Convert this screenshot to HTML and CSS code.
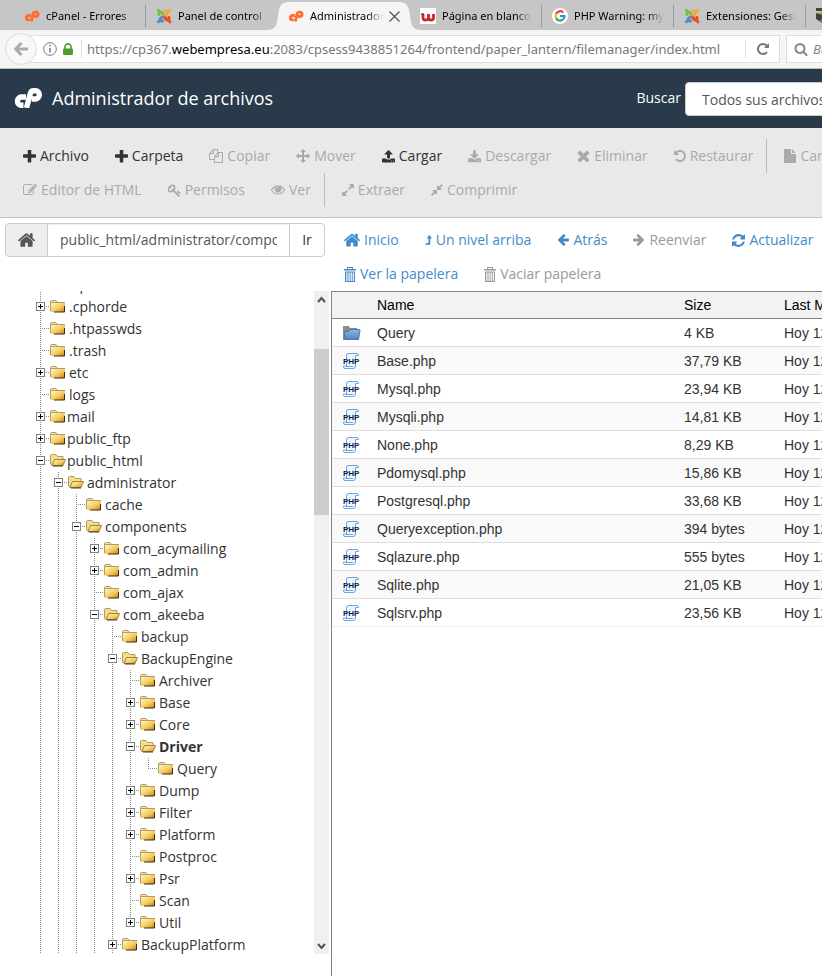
FILE: index.html
```html
<!DOCTYPE html>
<html lang="es">
<head>
<meta charset="utf-8">
<title>Administrador de archivos</title>
<link rel="stylesheet" href="styles.css">
</head>
<body>
<svg class="defs" aria-hidden="true">
  <defs>
    <linearGradient id="gold" x1="0" y1="0" x2="1" y2="1"><stop offset="0.1" stop-color="#fff3b8"/><stop offset="0.6" stop-color="#f3c85a"/><stop offset="0.85" stop-color="#dc9624"/><stop offset="1" stop-color="#8a5a10"/></linearGradient>
    <linearGradient id="blue" x1="0" y1="0" x2="0" y2="1"><stop offset="0" stop-color="#8fb8e6"/><stop offset="1" stop-color="#4d84c4"/></linearGradient>
  </defs>
  <symbol id="cp" viewBox="0 0 30 20"><g fill="none" stroke="currentColor" stroke-width="5.400"><path d="M13 9H8a4.200 4.200 0 0 0 0 8.300h2.500"/><path d="M13.500 20L17.300 5.500Q18 2.700 20.500 2.700h2.300a4.200 4.200 0 0 1 0 8.300h-4"/></g></symbol>
  <symbol id="joomla" viewBox="0 0 16 16"><g fill="none" stroke-width="3" stroke-linecap="round"><path stroke="#7ac143" d="M2.200 2.200h.2M3 6.500Q2.500 3.500 5 4L10 9"/><path stroke="#f9a541" d="M13.800 2.200h.1M9.500 3Q12.500 2.500 12 5L7 10"/><path stroke="#f44321" d="M13.800 13.800h.1M13 9.500Q13.500 12.500 11 12L8.500 9.500"/><path stroke="#5091cd" d="M2.200 13.800h.1M6.500 13Q3.500 13.500 4 11L6 9"/></g></symbol>
  <symbol id="plus" viewBox="192 192 1408 1408"><path d="M1600 736v192q0 40-28 68t-68 28h-416v416q0 40-28 68t-68 28h-192q-40 0-68-28t-28-68v-416h-416q-40 0-68-28t-28-68v-192q0-40 28-68t68-28h416v-416q0-40 28-68t68-28h192q40 0 68 28t28 68v416h416q40 0 68 28t28 68z"/></symbol>
  <symbol id="search" viewBox="0 0 1792 1792"><path d="M1216 832q0-185-131.500-316.500t-316.500-131.500-316.500 131.500-131.500 316.500 131.500 316.500 316.500 131.500 316.500-131.500 131.500-316.500zm512 832q0 52-38 90t-90 38q-54 0-90-38l-343-342q-179 124-399 124-143 0-273.500-55.500t-225-150-150-225-55.500-273.500 55.500-273.500 150-225 225-150 273.500-55.500 273.500 55.500 225 150 150 225 55.500 273.500q0 220-124 399l343 343q37 37 37 90z"/></symbol>
  <symbol id="home" viewBox="90 230 1612 1310"><path d="M1472 992v480q0 26-19 45t-45 19h-384v-384h-256v384h-384q-26 0-45-19t-19-45v-480q0-1 .5-3t.5-3l575-474 575 474q1 2 1 6zm223-69l-62 74q-8 9-21 11h-3q-13 0-21-7l-692-577-692 577q-12 8-24 7-13-2-21-11l-62-74q-8-10-7-23.500t11-21.500l719-599q32-26 76-26t76 26l244 204v-195q0-14 9-23t23-9h192q14 0 23 9t9 23v408l219 182q10 8 11 21.500t-7 23.500z"/></symbol>
  <symbol id="move" viewBox="0 0 1792 1792"><path d="M1792 896q0 26-19 45l-256 256q-19 19-45 19t-45-19-19-45v-128h-384v384h128q26 0 45 19t19 45-19 45l-256 256q-19 19-45 19t-45-19l-256-256q-19-19-19-45t19-45 45-19h128v-384h-384v128q0 26-19 45t-45 19-45-19l-256-256q-19-19-19-45t19-45l256-256q19-19 45-19t45 19 19 45v128h384v-384h-128q-26 0-45-19t-19-45 19-45l256-256q19-19 45-19t45 19l256 256q19 19 19 45t-19 45-45 19h-128v384h384v-128q0-26 19-45t45-19 45 19l256 256q19 19 19 45z"/></symbol>
  <symbol id="upload" viewBox="64 64 1664 1664"><path d="M1344 1472q0-26-19-45t-45-19-45 19-19 45 19 45 45 19 45-19 19-45zm256 0q0-26-19-45t-45-19-45 19-19 45 19 45 45 19 45-19 19-45zm128-224v320q0 40-28 68t-68 28h-1472q-40 0-68-28t-28-68v-320q0-40 28-68t68-28h427q21 56 70.500 92t110.500 36h256q61 0 110.500-36t70.500-92h427q40 0 68 28t28 68zm-325-648q-17 40-59 40h-256v448q0 26-19 45t-45 19h-256q-26 0-45-19t-19-45v-448h-256q-42 0-59-40-17-39 14-69l448-448q18-19 45-19t45 19l448 448q31 30 14 69z"/></symbol>
  <symbol id="download" viewBox="64 0 1664 1600"><path d="M1344 1344q0-26-19-45t-45-19-45 19-19 45 19 45 45 19 45-19 19-45zm256 0q0-26-19-45t-45-19-45 19-19 45 19 45 45 19 45-19 19-45zm128-224v320q0 40-28 68t-68 28h-1472q-40 0-68-28t-28-68v-320q0-40 28-68t68-28h465l135 136q58 56 136 56t136-56l136-136h464q40 0 68 28t28 68zm-325-569q17 41-14 70l-448 448q-18 19-45 19t-45-19l-448-448q-31-29-14-70 17-39 59-39h256v-448q0-26 19-45t45-19h256q26 0 45 19t19 45v448h256q42 0 59 39z"/></symbol>
  <symbol id="times" viewBox="292 292 1208 1332"><path d="M1490 1322q0 40-28 68l-136 136q-28 28-68 28t-68-28l-294-294-294 294q-28 28-68 28t-68-28l-136-136q-28-28-28-68t28-68l294-294-294-294q-28-28-28-68t28-68l136-136q28-28 68-28t68 28l294 294 294-294q28-28 68-28t68 28l136 136q28 28 28 68t-28 68l-294 294 294 294q28 28 28 68z"/></symbol>
  <symbol id="undo" viewBox="128 128 1536 1536"><path d="M1664 896q0 156-61 298t-164 245-245 164-298 61q-172 0-327-72.500t-264-204.500q-7-10-6.500-22.500t8.500-20.500l137-138q10-9 25-9 16 2 23 12 73 95 179 147t225 52q104 0 198.500-40.500t163.500-109.500 109.500-163.500 40.500-198.500-40.500-198.500-109.500-163.500-163.500-109.500-198.500-40.500q-98 0-188 35.500t-160 101.500l137 138q31 30 14 69-17 40-59 40h-448q-26 0-45-19t-19-45v-448q0-42 40-59 39-17 69 14l130 129q107-101 244.500-156.500t284.500-55.500q156 0 298 61t245 164 164 245 61 298z"/></symbol>
  <symbol id="refresh" viewBox="128 128 1536 1536"><path d="M1639 1056q0 5-1 7-64 268-268 434.500t-478 166.500q-146 0-282.500-55t-243.500-157l-129 129q-19 19-45 19t-45-19-19-45v-448q0-26 19-45t45-19h448q26 0 45 19t19 45-19 45l-137 137q71 66 161 102t187 36q134 0 250-65t186-179q11-17 53-117 8-23 30-23h192q13 0 22.500 9.500t9.500 22.500zm25-800v448q0 26-19 45t-45 19h-448q-26 0-45-19t-19-45 19-45l138-138q-148-137-349-137-134 0-250 65t-186 179q-11 17-53 117-8 23-30 23h-199q-13 0-22.500-9.500t-9.500-22.500v-7q65-268 270-434.500t480-166.500q146 0 284 55.500t245 156.500l130-129q19-19 45-19t45 19 19 45z"/></symbol>
  <symbol id="left" viewBox="64 192 1600 1550"><path d="M1664 896v128q0 53-32.500 90.500t-84.500 37.500h-704l293 294q38 36 38 90t-38 90l-75 76q-37 37-90 37-52 0-91-37l-651-652q-37-37-37-90 0-52 37-91l651-650q38-38 91-38 52 0 90 38l75 74q38 38 38 91t-38 91l-293 293h704q52 0 84.500 37.500t32.500 90.500z"/></symbol>
  <symbol id="expand" viewBox="128 128 1536 1536"><path d="M883 1056q0 13-10 23l-332 332 144 144q19 19 19 45t-19 45-45 19h-448q-26 0-45-19t-19-45v-448q0-26 19-45t45-19 45 19l144 144 332-332q10-10 23-10t23 10l114 114q10 10 10 23zm781-864v448q0 26-19 45t-45 19-45-19l-144-144-332 332q-10 10-23 10t-23-10l-114-114q-10-10-10-23t10-23l332-332-144-144q-19-19-19-45t19-45 45-19h448q26 0 45 19t19 45z"/></symbol>
  <symbol id="compress" viewBox="128 128 1536 1536"><path d="M896 960v448q0 26-19 45t-45 19-45-19l-144-144-332 332q-10 10-23 10t-23-10l-114-114q-10-10-10-23t10-23l332-332-144-144q-19-19-19-45t19-45 45-19h448q26 0 45 19t19 45zm755-672q0 13-10 23l-332 332 144 144q19 19 19 45t-19 45-45 19h-448q-26 0-45-19t-19-45v-448q0-26 19-45t45-19 45 19l144 144 332-332q10-10 23-10t23 10l114 114q10 10 10 23z"/></symbol>
  <symbol id="eye" viewBox="0 64 1792 1792"><path d="M1664 960q-152-236-381-353 61 104 61 225 0 185-131.500 316.500t-316.500 131.500-316.500-131.500-131.500-316.500q0-121 61-225-229 117-381 353 133 205 333.500 326.500t434.500 121.500 434.500-121.500 333.500-326.500zm-720-384q0-20-14-34t-34-14q-125 0-214.500 89.500t-89.500 214.500q0 20 14 34t34 14 34-14 14-34q0-86 61-147t147-61q20 0 34-14t14-34zm848 384q0 34-20 69-140 230-376.500 368.500t-499.500 138.500-499.500-139-376.500-368q-20-35-20-69t20-69q140-229 376.500-368t499.500-139 499.500 139 376.500 368q20 35 20 69z"/></symbol>
  <symbol id="key" viewBox="64 64 1664 1664"><path d="M832 512q0-80-56-136t-136-56-136 56-56 136q0 42 19 83-41-19-83-19-80 0-136 56t-56 136 56 136 136 56 136-56 56-136q0-42-19-83 41 19 83 19 80 0 136-56t56-136zm851 704q0 17-49 66t-66 49q-9 0-28.500-16t-36.500-33-38.500-40-24.500-26l-96 96 220 220q28 28 28 68 0 42-39 81t-81 39q-40 0-68-28l-671-671q-176 131-365 131-163 0-265.500-102.500t-102.500-265.500q0-160 95-313t248-248 313-95q163 0 265.500 102.500t102.500 265.500q0 189-131 365l355 355 96-96q-3-3-26-24.500t-40-38.500-33-36.500-16-28.500q0-17 49-66t66-49q13 0 23 10 6 6 46 44.500t82 79.500 86.500 86 73 78 28.500 41z"/></symbol>
  <symbol id="file" viewBox="128 0 1536 1792"><path d="M1152 512v-472q22 14 36 28l408 408q14 14 28 36h-472zm-128 32q0 40 28 68t68 28h544v1056q0 40-28 68t-68 28h-1344q-40 0-68-28t-28-68v-1600q0-40 28-68t68-28h800v544z"/></symbol>
  <symbol id="edit" viewBox="0 64 1792 1664"><path d="M888 1184l116-116-152-152-116 116v56h96v96h56zm440-720q-16-16-33 1l-350 350q-17 17-1 33t33-1l350-350q17-17 1-33zm80 594v190q0 119-84.500 203.500t-203.500 84.500h-832q-119 0-203.500-84.500t-84.500-203.500v-832q0-119 84.500-203.500t203.500-84.500h832q63 0 117 25 15 7 18 23 3 17-9 29l-49 49q-14 14-32 8-23-6-45-6h-832q-66 0-113 47t-47 113v832q0 66 47 113t113 47h832q66 0 113-47t47-113v-126q0-13 9-22l64-64q15-15 35-7t20 29zm-96-738l288 288-672 672h-288v-288zm444 132l-92 92-288-288 92-92q28-28 68-28t68 28l152 152q28 28 28 68t-28 68z"/></symbol>
  <symbol id="copy" viewBox="0 0 1792 1792"><path d="M1696 384q40 0 68 28t28 68v1216q0 40-28 68t-68 28h-960q-40 0-68-28t-28-68v-288h-544q-40 0-68-28t-28-68v-672q0-40 20-88t48-76l408-408q28-28 76-48t88-20h416q40 0 68 28t28 68v328q68-40 128-40h416zm-544 213l-299 299h299v-299zm-640-384l-299 299h299v-299zm196 647l316-316v-416h-384v416q0 40-28 68t-68 28h-416v640h512v-256q0-40 20-88t48-76zm956 804v-1152h-384v416q0 40-28 68t-68 28h-416v640h896z"/></symbol>
  <symbol id="lock" viewBox="320 128 1152 1408"><path d="M640 768h512v-192q0-106-75-181t-181-75-181 75-75 181v192zm832 96v576q0 40-28 68t-68 28h-960q-40 0-68-28t-28-68v-576q0-40 28-68t68-28h32v-192q0-184 132-316t316-132 316 132 132 316v192h32q40 0 68 28t28 68z"/></symbol>
  <symbol id="up" viewBox="0 0 8 12"><path d="M5 0L8 4.200H6V11.500H0L1.500 9.500H4V4.200H2z"/></symbol>
  <symbol id="trash" viewBox="0 0 12 15"><path fill-rule="evenodd" d="M3 0h6v2h3v1.500H0V2h3zM4 1v1h4V1zM1 4.500h10V15H1zM2.300 5.500v8.500h1.200V5.500zM4.500 5.500v8.500h1.200V5.500zM6.600 5.500v8.500h1.200V5.500zM8.700 5.500v8.500h1.200V5.500z"/></symbol>
  <symbol id="folder" viewBox="0 0 16 16"><path fill="#f9e7a0" stroke="#b39a68" d="M.5 6V3.200L1.500 2.500H6L7.500 4.500z"/><path fill="url(#gold)" d="M0 4.500h15V14H1.500L0 13z"/><path fill="none" stroke="#b39a68" d="M.5 13V4.500H15"/><path fill="none" stroke="#3f2f12" d="M4 14h10.500V8"/></symbol>
  <symbol id="open" viewBox="0 0 16 16"><path fill="#f8dd88" stroke="#b39a68" d="M.5 12V3.200L1.500 2.500H6L7.500 4.500H13V8L3 13.500H2z"/><path fill="url(#gold)" stroke="#a07f45" d="M4.500 7.500h11L13 13.500H2z"/><path fill="none" stroke="#4d3c1c" d="M3 14h10"/></symbol>
  <symbol id="dir" viewBox="0 0 18 16"><path fill="#8b8b88" d="M0 1h6l1 2h7v12H0z"/><path fill="url(#blue)" stroke="#4777ad" d="M1.500 6.500L6 6.500 7 4.500H16.500L17 5.500 15.500 14.500H2z"/></symbol>
  <symbol id="php" viewBox="0 0 17 16"><path fill="#eff6fd" stroke="#6da4dc" d="M3.500 3.500Q3 .5 5 .5h9.500q1 0 1 2H12.500V13q0 2.500-2.500 2.500H1.500q-1 0-1-2.500h3z"/><path stroke="#6da4dc" fill="none" d="M3 13.500h7"/><text x="0" y="11" class="php-mark">PHP</text></symbol>
</svg>

<nav class="tabs" aria-label="Pestañas">
  <a class="tab" href="#"><svg class="fav orange"><use href="#cp"/></svg><span>cPanel - Errores</span></a>
  <a class="tab unruled" href="#"><svg class="fav"><use href="#joomla"/></svg><span>Panel de control - Admin</span></a>
  <div class="tab active">
    <svg class="tab-shape" viewBox="0 0 154 28" aria-hidden="true"><path fill="#f5f5f5" d="M0 28C9 28 10 22 11 14C12 4 14 0 22 0H132C140 0 142 4 143 14C144 22 145 28 154 28z"/></svg>
    <svg class="fav orange"><use href="#cp"/></svg><span>Administrador</span>
    <button class="close" aria-label="Cerrar pestaña"><svg viewBox="0 0 11 11"><path d="M.5.5l10 10M10.500.5l-10 10" stroke="#555" stroke-width="1.300"/></svg></button>
  </div>
  <a class="tab" href="#"><svg class="fav" viewBox="0 0 16 16"><path fill="#fff" d="M0 0h16v16H0z"/><path fill="none" stroke="#d3232e" stroke-width="2.800" d="M3 6v4q0 2 2.500 2T8.500 10V6M8.500 10q0 2 2.500 2t2.500-2V6"/><path stroke="#222" d="M1 6h3"/></svg><span>Página en blanco</span></a>
  <a class="tab" href="#"><svg class="fav" viewBox="0 0 16 16"><circle cx="8" cy="8" r="8" fill="#fff"/><g fill="none" stroke-width="2.200"><path stroke="#ea4335" d="M4 6a4.500 4.500 0 0 1 7.300-1.500"/><path stroke="#fbbc05" d="M4 6a4.500 4.500 0 0 0 0 4"/><path stroke="#34a853" d="M4 10a4.500 4.500 0 0 0 7 1.500"/><path stroke="#4285f4" d="M8 8h4.500a4.500 4.500 0 0 1-1.500 3.500"/></g></svg><span>PHP Warning: my</span></a>
  <a class="tab" href="#"><svg class="fav"><use href="#joomla"/></svg><span>Extensiones: Gesti</span></a>
  <a class="tab" href="#" aria-label="Pestaña"><svg class="fav" viewBox="0 0 16 16"><path fill="#3f4142" d="M0 5l8 2 8-3v8l-8 4-8-5z"/><path fill="#6cbf3a" d="M0 5l8-1 8 1-8 2zM4 12l4 4 8-4-8-1z"/><path fill="#444" d="M0 0h14v3H0z"/></svg></a>
</nav>

<div class="navbar">
  <button class="back" aria-label="Atrás"><svg viewBox="0 0 14 14"><path d="M7.500 1L1.500 7l6 6M2 7h12" fill="none" stroke="#aaa" stroke-width="3"/></svg></button>
  <div class="address">
    <svg class="info" viewBox="0 0 14 14"><circle cx="7" cy="7" r="6.300" fill="none" stroke="#777"/><path d="M7 6v4.500M7 3v1.500" stroke="#777" stroke-width="1.500"/></svg>
    <svg class="padlock"><use href="#lock"/></svg>
    <div class="url">https://cp367.<b>webempresa.eu</b>:2083/cpsess9438851264/frontend/paper_lantern/filemanager/index.html</div>
    <button class="reload" aria-label="Recargar"><svg class="flip"><use href="#undo"/></svg></button>
  </div>
  <label class="find"><svg><use href="#search"/></svg><input type="text" placeholder="Buscar" aria-label="Buscar en la web"></label>
</div>

<header class="header">
  <svg class="logo"><use href="#cp"/></svg>
  <h1>Administrador de archivos</h1>
  <form class="search-form">
    <label for="scope">Buscar</label>
    <select id="scope"><option>Todos sus archivos</option></select>
  </form>
</header>

<div class="toolbar">
  <div class="tools">
    <button class="btn"><svg class="i13"><use href="#plus"/></svg>Archivo</button>
    <button class="btn"><svg class="i13"><use href="#plus"/></svg>Carpeta</button>
    <button class="btn" disabled><svg class="i14"><use href="#copy"/></svg>Copiar</button>
    <button class="btn" disabled><svg class="i14"><use href="#move"/></svg>Mover</button>
    <button class="btn"><svg class="i13"><use href="#upload"/></svg>Cargar</button>
    <button class="btn" disabled><svg class="i13"><use href="#download"/></svg>Descargar</button>
    <button class="btn" disabled><svg class="i13"><use href="#times"/></svg>Eliminar</button>
    <button class="btn" disabled><svg class="i12"><use href="#undo"/></svg>Restaurar</button>
    <button class="btn ruled" disabled><svg class="i12"><use href="#file"/></svg>Cambiar nombre</button>
  </div>
  <div class="tools">
    <button class="btn" disabled><svg class="i14"><use href="#edit"/></svg>Editor de HTML</button>
    <button class="btn" disabled><svg class="i13"><use href="#key"/></svg>Permisos</button>
    <button class="btn" disabled><svg class="i14"><use href="#eye"/></svg>Ver</button>
    <button class="btn ruled" disabled><svg class="i12"><use href="#expand"/></svg>Extraer</button>
    <button class="btn" disabled><svg class="i12"><use href="#compress"/></svg>Comprimir</button>
  </div>
</div>

<main class="main">
  <aside class="side">
    <form class="path">
      <button type="button" class="path-home" aria-label="Inicio"><svg><use href="#home"/></svg></button>
      <input type="text" aria-label="Ruta" value="public_html/administrator/components/com_akeeba">
      <button type="button" class="path-go">Ir</button>
    </form>
    <div class="tree-pane">
      <div class="tree-view">
        <ul class="tree">
          <li><div class="node"><button aria-label="Expandir"></button><i></i><svg><use href="#folder"/></svg>.cpanel</div></li>
          <li><div class="node"><button aria-label="Expandir"></button><i></i><svg><use href="#folder"/></svg>.cphorde</div></li>
          <li><div class="node"><i></i><svg><use href="#folder"/></svg>.htpasswds</div></li>
          <li><div class="node"><i></i><svg><use href="#folder"/></svg>.trash</div></li>
          <li><div class="node"><button aria-label="Expandir"></button><i></i><svg><use href="#folder"/></svg>etc</div></li>
          <li><div class="node"><i></i><svg><use href="#folder"/></svg>logs</div></li>
          <li><div class="node tight"><button aria-label="Expandir"></button><i></i><svg><use href="#folder"/></svg>mail</div></li>
          <li><div class="node tight"><button aria-label="Expandir"></button><i></i><svg><use href="#folder"/></svg>public_ftp</div></li>
          <li><div class="node tight"><button class="opened" aria-label="Contraer"></button><i></i><svg><use href="#open"/></svg>public_html</div>
            <ul>
              <li><div class="node"><button class="opened" aria-label="Contraer"></button><i></i><svg><use href="#open"/></svg>administrator</div>
                <ul>
                  <li><div class="node"><i></i><svg><use href="#folder"/></svg>cache</div></li>
                  <li><div class="node"><button class="opened" aria-label="Contraer"></button><i></i><svg><use href="#open"/></svg>components</div>
                    <ul>
                      <li><div class="node"><button aria-label="Expandir"></button><i></i><svg><use href="#folder"/></svg>com_acymailing</div></li>
                      <li><div class="node"><button aria-label="Expandir"></button><i></i><svg><use href="#folder"/></svg>com_admin</div></li>
                      <li><div class="node"><i></i><svg><use href="#folder"/></svg>com_ajax</div></li>
                      <li><div class="node"><button class="opened" aria-label="Contraer"></button><i></i><svg><use href="#open"/></svg>com_akeeba</div>
                        <ul>
                          <li><div class="node"><i></i><svg><use href="#folder"/></svg>backup</div></li>
                          <li><div class="node"><button class="opened" aria-label="Contraer"></button><i></i><svg><use href="#open"/></svg>BackupEngine</div>
                            <ul>
                              <li><div class="node"><i></i><svg><use href="#folder"/></svg>Archiver</div></li>
                              <li><div class="node"><button aria-label="Expandir"></button><i></i><svg><use href="#folder"/></svg>Base</div></li>
                              <li><div class="node"><button aria-label="Expandir"></button><i></i><svg><use href="#folder"/></svg>Core</div></li>
                              <li><div class="node current"><button class="opened" aria-label="Contraer"></button><i></i><svg><use href="#open"/></svg>Driver</div>
                                <ul>
                                  <li class="last"><div class="node"><i></i><svg><use href="#folder"/></svg>Query</div></li>
                                </ul>
                              </li>
                              <li><div class="node"><button aria-label="Expandir"></button><i></i><svg><use href="#folder"/></svg>Dump</div></li>
                              <li><div class="node"><button aria-label="Expandir"></button><i></i><svg><use href="#folder"/></svg>Filter</div></li>
                              <li><div class="node"><button aria-label="Expandir"></button><i></i><svg><use href="#folder"/></svg>Platform</div></li>
                              <li><div class="node"><i></i><svg><use href="#folder"/></svg>Postproc</div></li>
                              <li><div class="node"><button aria-label="Expandir"></button><i></i><svg><use href="#folder"/></svg>Psr</div></li>
                              <li><div class="node"><i></i><svg><use href="#folder"/></svg>Scan</div></li>
                              <li class="last"><div class="node"><button aria-label="Expandir"></button><i></i><svg><use href="#folder"/></svg>Util</div></li>
                            </ul>
                          </li>
                          <li><div class="node"><button aria-label="Expandir"></button><i></i><svg><use href="#folder"/></svg>BackupPlatform</div></li>
                        </ul>
                      </li>
                    </ul>
                  </li>
                </ul>
              </li>
            </ul>
          </li>
        </ul>
      </div>
      <div class="scroll" aria-hidden="true">
        <svg viewBox="0 0 15 17"><path d="M4 11l3.500-4 3.500 4" /></svg>
        <div class="thumb"></div>
        <svg viewBox="0 0 15 17"><path d="M4 7l3.500 4 3.500-4" /></svg>
      </div>
    </div>
  </aside>

  <section class="content">
    <div class="actions">
      <div class="tools">
        <button class="btn link"><svg class="i16"><use href="#home"/></svg>Inicio</button>
        <button class="btn link"><svg class="i7"><use href="#up"/></svg>Un nivel arriba</button>
        <button class="btn link"><svg class="i12"><use href="#left"/></svg>Atrás</button>
        <button class="btn link" disabled><svg class="i12 flip"><use href="#left"/></svg>Reenviar</button>
        <button class="btn link"><svg class="i13"><use href="#refresh"/></svg>Actualizar</button>
      </div>
      <div class="tools">
        <button class="btn link"><svg class="i12 tall"><use href="#trash"/></svg>Ver la papelera</button>
        <button class="btn link" disabled><svg class="i12 tall"><use href="#trash"/></svg>Vaciar papelera</button>
      </div>
    </div>
    <div class="files">
      <table>
        <thead><tr><th class="c-icon"></th><th class="c-name">Name</th><th class="c-size">Size</th><th>Last Modified</th></tr></thead>
        <tbody>
          <tr><td><svg class="dir"><use href="#dir"/></svg></td><td>Query</td><td>4 KB</td><td>Hoy 12:21</td></tr>
          <tr><td><svg><use href="#php"/></svg></td><td>Base.php</td><td>37,79 KB</td><td>Hoy 12:21</td></tr>
          <tr><td><svg><use href="#php"/></svg></td><td>Mysql.php</td><td>23,94 KB</td><td>Hoy 12:21</td></tr>
          <tr><td><svg><use href="#php"/></svg></td><td>Mysqli.php</td><td>14,81 KB</td><td>Hoy 12:21</td></tr>
          <tr><td><svg><use href="#php"/></svg></td><td>None.php</td><td>8,29 KB</td><td>Hoy 12:21</td></tr>
          <tr><td><svg><use href="#php"/></svg></td><td>Pdomysql.php</td><td>15,86 KB</td><td>Hoy 12:21</td></tr>
          <tr><td><svg><use href="#php"/></svg></td><td>Postgresql.php</td><td>33,68 KB</td><td>Hoy 12:21</td></tr>
          <tr><td><svg><use href="#php"/></svg></td><td>Queryexception.php</td><td>394 bytes</td><td>Hoy 12:21</td></tr>
          <tr><td><svg><use href="#php"/></svg></td><td>Sqlazure.php</td><td>555 bytes</td><td>Hoy 12:21</td></tr>
          <tr><td><svg><use href="#php"/></svg></td><td>Sqlite.php</td><td>21,05 KB</td><td>Hoy 12:21</td></tr>
          <tr><td><svg><use href="#php"/></svg></td><td>Sqlsrv.php</td><td>23,56 KB</td><td>Hoy 12:21</td></tr>
        </tbody>
      </table>
    </div>
  </section>
</main>
</body>
</html>
```
FILE: styles.css
```css
* { box-sizing: border-box; }

body {
  margin: 0;
  height: 100vh;
  display: flex;
  flex-direction: column;
  overflow: hidden;
  background: #fff;
  color: #333;
  font: 14px/20px "Open Sans", sans-serif;
}

button, input, select { font: inherit; color: inherit; }
button { margin: 0; padding: 0; border: 0; background: none; }
svg { flex: none; fill: currentColor; }
ul { list-style: none; margin: 0; padding: 0; }
.defs { position: absolute; width: 0; height: 0; }
.flip { transform: scaleX(-1); }

/* Browser tabs */
.tabs {
  display: flex;
  flex: none;
  height: 30px;
  padding-left: 14px;
  overflow: hidden;
  background: #c6c6c6;
  font: 11px/16px "Noto Sans", sans-serif;
}
.tab {
  position: relative;
  display: flex;
  flex: none;
  align-items: center;
  gap: 6px;
  width: 132px;
  padding: 2px 10px 0;
  color: #000;
  text-decoration: none;
  background: linear-gradient(#999, #999) right 5px / 1px 22px no-repeat;
}
.tab.active, .tab.unruled { background: none; }
.tab span {
  position: relative;
  flex: 1;
  overflow: hidden;
  white-space: nowrap;
  mask-image: linear-gradient(to left, transparent, #000 16px);
}
.tab .fav { position: relative; width: 16px; height: 16px; }
.orange { color: #ff6c2c; }
.tab-shape { position: absolute; left: -11px; top: 2px; width: 154px; height: 28px; }
.close { position: relative; width: 11px; height: 11px; }
.close svg { display: block; width: 11px; height: 11px; }

/* Address bar */
.navbar {
  display: flex;
  flex: none;
  align-items: center;
  height: 39px;
  padding-left: 5px;
  overflow: hidden;
  background: #f5f5f5;
  border-bottom: 1px solid #bbb;
}
.back {
  position: relative;
  z-index: 1;
  display: grid;
  place-items: center;
  flex: none;
  width: 32px;
  height: 32px;
  border: 1px solid #ddd;
  border-radius: 50%;
  background: #f8f8f8;
}
.back svg { width: 14px; height: 14px; }
.address {
  display: flex;
  align-items: center;
  flex: 1;
  min-width: 0;
  height: 28px;
  margin-left: -10px;
  padding-left: 15px;
  border: 1px solid #ddd;
  background: #fff;
}
.info { width: 14px; height: 14px; }
.padlock { width: 10px; height: 12px; margin: 0 8px 0 6px; color: #4b9e26; }
.url {
  flex: 1;
  overflow: hidden;
  padding-left: 5px;
  border-left: 1px solid #ddd;
  white-space: nowrap;
  color: #777;
  font: 13px/18px "Noto Sans", sans-serif;
}
.url b { font-weight: normal; color: #000; }
.reload { display: grid; place-items: center; width: 34px; height: 18px; border-left: 1px solid #ddd; color: #777; }
.reload svg { width: 12px; height: 12px; }
.find {
  display: flex;
  align-items: center;
  gap: 5px;
  flex: none;
  width: 36px;
  height: 28px;
  margin-left: 6px;
  padding-left: 7px;
  border: 1px solid #ddd;
  border-right: 0;
  background: #fff;
  color: #888;
}
.find svg { width: 14px; height: 14px; }
.find input { flex: 1; min-width: 0; padding: 0; border: 0; font: italic 13px/18px "Noto Sans", sans-serif; }
.find input::placeholder { color: #888; }

/* Header */
.header {
  display: flex;
  flex: none;
  align-items: center;
  height: 59px;
  padding-left: 13px;
  overflow: hidden;
  background: #293a4a;
  color: #fff;
}
.logo { width: 30px; height: 20px; margin-bottom: 2px; }
.header h1 { flex: 1; margin: 0 0 2px 9px; font-size: 18px; line-height: 24px; font-weight: normal; white-space: nowrap; }
.search-form { display: flex; align-items: center; gap: 4px; margin-right: -63px; }
.search-form label { margin-bottom: 2px; }
.search-form select {
  width: 200px;
  height: 34px;
  padding: 2px 16px 0;
  border: 1px solid #ccc;
  border-radius: 4px;
  appearance: none;
  background: #fff;
  color: #555;
}

/* Toolbars */
.toolbar {
  flex: none;
  padding: 11px 0 10px 10px;
  background: #e9e9e9;
  border-bottom: 1px solid #bcc4cc;
}
.tools { display: flex; height: 34px; overflow: hidden; }
.btn {
  display: flex;
  flex: none;
  align-items: center;
  gap: 4px;
  padding: 0 13px;
  white-space: nowrap;
}
.btn:disabled { color: #aaa; }
.btn.ruled { padding-left: 17px; border-left: 1px solid #bbb; }
.link { color: #428bca; }
.link:disabled { color: #999; }
.i7 { width: 7px; height: 12px; }
.i12 { width: 12px; height: 14px; }
.i13 { width: 13px; height: 13px; }
.i14 { width: 14px; height: 14px; }
.i16 { width: 16px; height: 14px; }
.tall { height: 15px; }

/* Body */
.main { display: grid; grid-template-columns: 331px minmax(0, 1fr); flex: 1; min-height: 0; }
.side { display: flex; flex-direction: column; min-height: 0; padding-top: 5px; }
.path { display: flex; flex: none; height: 34px; margin: 0 6px 34px 5px; }
.path > * { border: 1px solid #ccc; }
.path-home { display: grid; place-items: center; width: 43px; background: #eee; border-radius: 4px 0 0 4px; color: #555; }
.path-home svg { width: 17px; height: 14px; }
.path input {
  flex: 1;
  min-width: 0;
  margin: 0 -1px;
  padding: 0 12px;
  color: #555;
  box-shadow: inset 0 1px 1px rgba(0, 0, 0, .075);
}
.path-go { width: 36px; border-radius: 0 4px 4px 0; background: #fff; }

.tree-pane { display: flex; flex: 1; min-height: 0; margin: 0 2px 22px 0; }
.tree-view { flex: 1; overflow: hidden; padding-left: 36px; }
.tree { margin-top: -17px; }
.tree ul { padding-left: 18px; }
.tree li { background: repeating-linear-gradient(#888 0 1px, transparent 1px 2px) 4px 0 / 1px 100% no-repeat; }
.tree li.last { background-size: 1px 10px; }
.node { display: flex; align-items: center; height: 22px; white-space: nowrap; }
.node > * { margin-bottom: 2px; }
.node i {
  width: 10px;
  height: 1px;
  margin-left: 4px;
  background: repeating-linear-gradient(to right, #888 0 1px, transparent 1px 2px);
}
.node button {
  width: 9px;
  height: 9px;
  border: 1px solid #808080;
  background: linear-gradient(#000, #000) center / 5px 1px no-repeat, linear-gradient(#000, #000) center / 1px 5px no-repeat, #fff;
}
.node button.opened { background: linear-gradient(#000, #000) center / 5px 1px no-repeat, #fff; }
.node button + i { width: 4px; margin-left: 1px; }
.node svg { width: 16px; height: 16px; margin-right: 3px; }
.node.tight svg { margin-right: 1px; }
.node.current { font-weight: bold; }

.scroll { display: flex; flex-direction: column; width: 15px; background: #f0f0f0; }
.scroll svg { width: 15px; height: 17px; fill: none; stroke: #505050; stroke-width: 2; }
.scroll svg:last-child { margin-top: auto; }
.thumb { height: 25%; margin-top: 41px; background: #cdcdcd; }

.content { display: flex; flex-direction: column; min-width: 0; }
.actions { flex: none; padding-top: 5px; }
.files { flex: 1; overflow: hidden; border: 1px solid #808080; border-width: 1px 0 0 1px; }
.files table {
  width: 100%;
  table-layout: fixed;
  border-collapse: separate;
  border-spacing: 0;
  font: 14px/20px "Liberation Sans", sans-serif;
}
.files th, .files td { height: 28px; padding: 0; border-bottom: 1px solid #ddd; text-align: left; white-space: nowrap; }
.files th { height: 27px; background: #f2f2f2; border-color: #808080; color: #000; font-weight: normal; }
.files tr:nth-child(even) td { background: #f9f9f9; }
.files tr:last-child td { border-color: #eee; }
.files thead tr:last-child th { border-color: #808080; }
.files td svg { display: block; width: 17px; height: 16px; margin-left: 11px; }
.files td .dir { width: 18px; }
.c-icon { width: 45px; }
.c-name { width: 307px; }
.c-size { width: 100px; }
.php-mark { font: bold 8px "Liberation Sans", sans-serif; fill: #0d1c50; }
```
